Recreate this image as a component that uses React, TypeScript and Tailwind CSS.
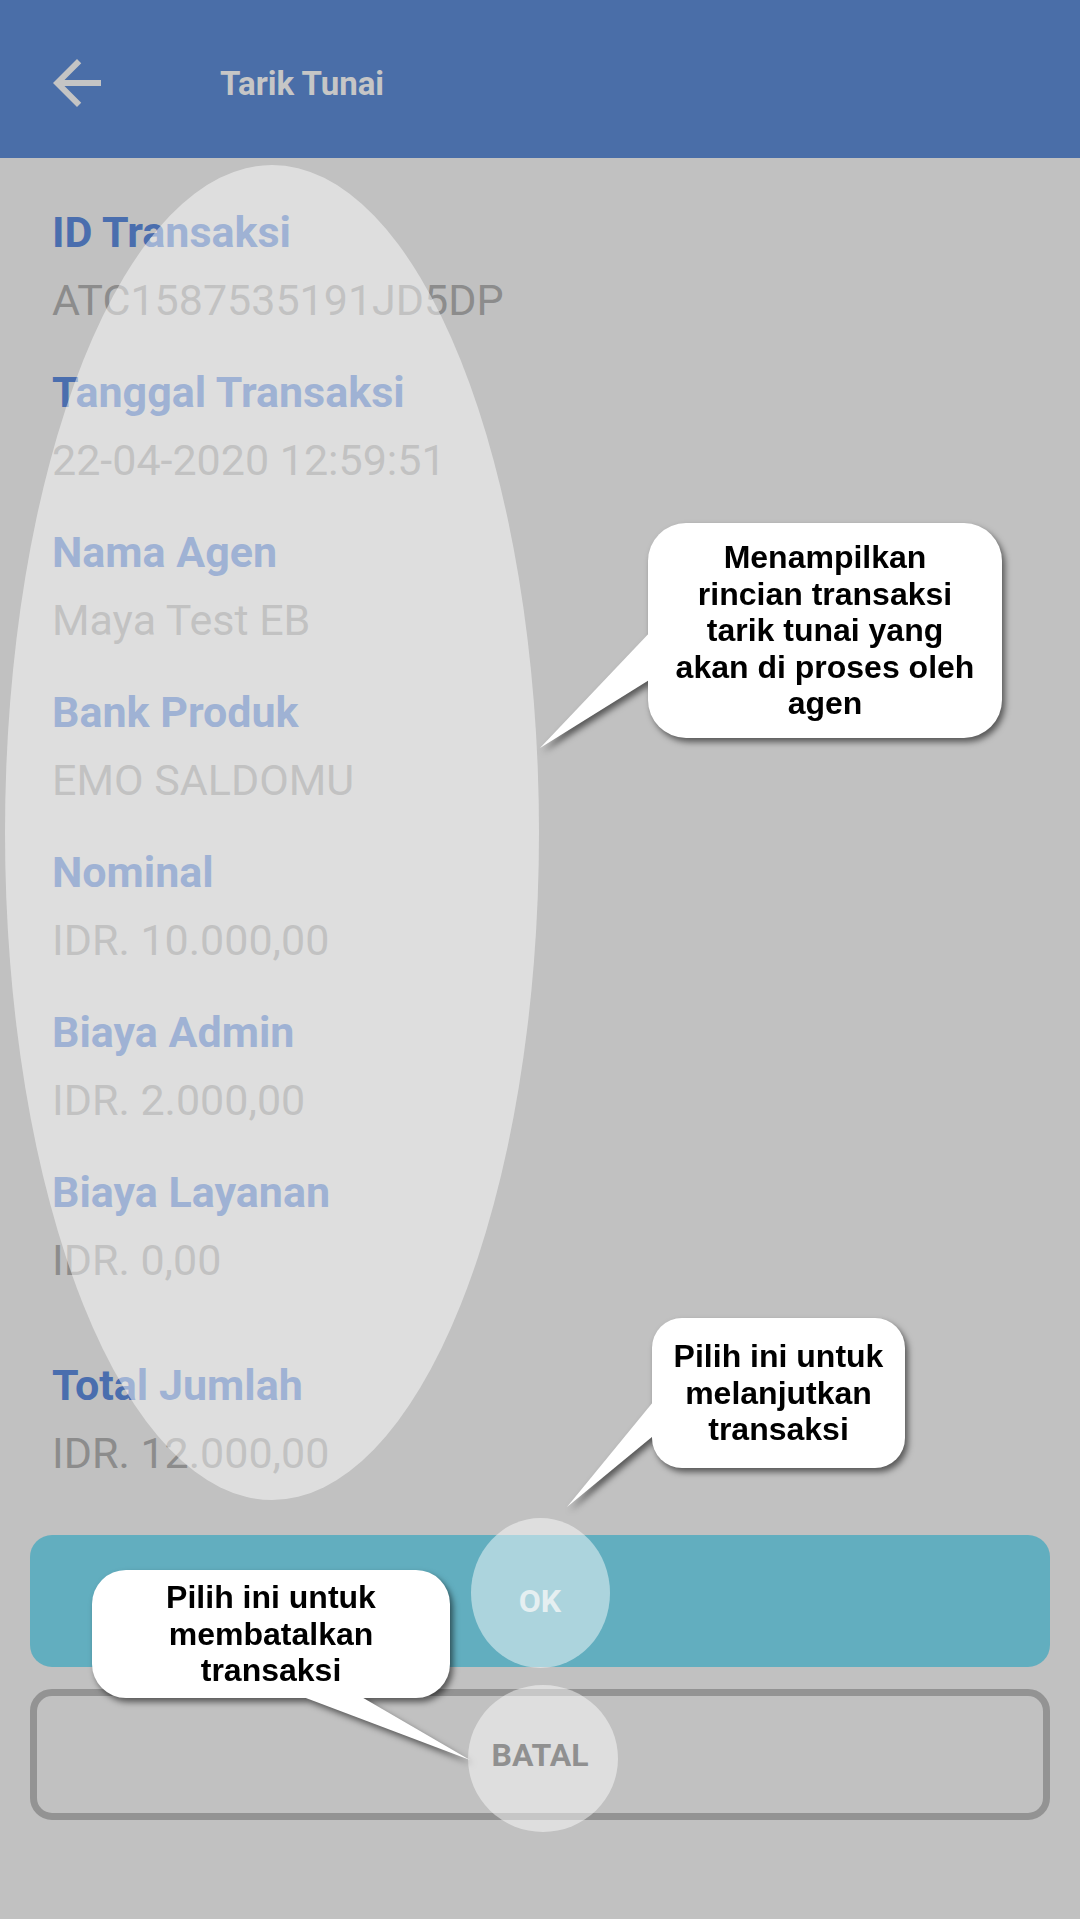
import React from "react";

const fields: { label: string; value: string }[] = [
  { label: "ID Transaksi", value: "ATC1587535191JD5DP" },
  { label: "Tanggal Transaksi", value: "22-04-2020 12:59:51" },
  { label: "Nama Agen", value: "Maya Test EB" },
  { label: "Bank Produk", value: "EMO SALDOMU" },
  { label: "Nominal", value: "IDR. 10.000,00" },
  { label: "Biaya Admin", value: "IDR. 2.000,00" },
  { label: "Biaya Layanan", value: "IDR. 0,00" },
];

function Field({ label, value, className = "" }: { label: string; value: string; className?: string }) {
  return (
    <div className={"flex flex-col gap-[18px] " + className}>
      <div className="text-[43px] leading-[50px] font-bold text-[#4a6eae] whitespace-nowrap">{label}</div>
      <div className="text-[43px] leading-[50px] font-normal text-[#8c8c8c] whitespace-nowrap">{value}</div>
    </div>
  );
}

const bubbleText =
  "flex flex-col items-center justify-center bg-white text-black font-bold text-[32px] leading-[36.5px] whitespace-nowrap text-center";

export default function App() {
  return (
    <div
      className="relative w-[1080px] min-h-[1919px] bg-[#c1c1c1] overflow-hidden"
      style={{ fontFamily: "Roboto, 'Noto Sans', sans-serif" }}
    >
      {/* Header */}
      <div className="h-[158px] bg-[#4a6ea8] flex items-center pt-[8px] pl-[41px]">
        <svg width="72" height="72" viewBox="0 0 24 24" fill="#c4c4c4">
          <path d="M20 11H7.83l5.59-5.59L12 4l-8 8 8 8 1.41-1.41L7.83 13H20v-2z" />
        </svg>
        <div className="ml-[107px] mt-[2px] text-[33px] leading-[36px] font-bold text-[#c6c6c6]">Tarik Tunai</div>
      </div>

      {/* Fields */}
      <div className="flex flex-col gap-[42px] pt-[49px] pl-[52px]">
        {fields.map((f) => (
          <Field key={f.label} label={f.label} value={f.value} />
        ))}
        <Field label="Total Jumlah" value="IDR. 12.000,00" className="mt-[33px]" />
      </div>

      {/* Buttons */}
      <div className="flex flex-col gap-[22px] px-[30px] pt-[57px]">
        <div className="h-[132px] rounded-[22px] bg-[#62aebf] flex items-center justify-center">
          <span className="text-[32px] font-bold text-[#cfe0e4]">OK</span>
        </div>
        <div className="h-[131px] rounded-[22px] border-[7px] border-[#939393] flex items-center justify-center">
          <span className="text-[32px] font-bold text-[#2e2e2e]">BATAL</span>
        </div>
      </div>

      {/* Highlight overlays */}
      <div className="pointer-events-none absolute left-[5px] top-[165px] w-[534px] h-[1335px] rounded-[50%] bg-white/[0.47]" />
      <div className="pointer-events-none absolute left-[471px] top-[1518px] w-[139px] h-[150px] rounded-[50%] bg-white/[0.47]" />
      <div className="pointer-events-none absolute left-[468px] top-[1685px] w-[150px] h-[147px] rounded-[50%] bg-white/[0.47]" />

      {/* Callout 1 */}
      <div
        className="absolute left-[530px] top-[520px] w-[480px] h-[240px] drop-shadow-[3px_4px_3px_rgba(0,0,0,0.55)]"
        style={{ fontFamily: "'Liberation Sans', Arial, sans-serif" }}
      >
        <svg className="absolute inset-0" width="480" height="240">
          <polygon points="124,108 10,228 124,157" fill="#ffffff" />
        </svg>
        <div className={"absolute left-[118px] top-[3px] w-[354px] h-[215px] rounded-[38px] " + bubbleText}>
          <span>Menampilkan</span>
          <span>rincian transaksi</span>
          <span>tarik tunai yang</span>
          <span>akan di proses oleh</span>
          <span>agen</span>
        </div>
      </div>

      {/* Callout 2 */}
      <div
        className="absolute left-[555px] top-[1310px] w-[360px] h-[210px] drop-shadow-[3px_4px_3px_rgba(0,0,0,0.55)]"
        style={{ fontFamily: "'Liberation Sans', Arial, sans-serif" }}
      >
        <svg className="absolute inset-0" width="360" height="210">
          <polygon points="103,86 12,197 103,122" fill="#ffffff" />
        </svg>
        <div className={"absolute left-[97px] top-[8px] w-[253px] h-[150px] rounded-[30px] " + bubbleText}>
          <span>Pilih ini untuk</span>
          <span>melanjutkan</span>
          <span>transaksi</span>
        </div>
      </div>

      {/* Callout 3 */}
      <div
        className="absolute left-[85px] top-[1565px] w-[400px] h-[210px] drop-shadow-[3px_4px_3px_rgba(0,0,0,0.55)]"
        style={{ fontFamily: "'Liberation Sans', Arial, sans-serif" }}
      >
        <svg className="absolute inset-0" width="400" height="210">
          <polygon points="205,127 385,195 268,127" fill="#ffffff" />
        </svg>
        <div className={"absolute left-[7px] top-[5px] w-[358px] h-[128px] rounded-[34px] " + bubbleText}>
          <span>Pilih ini untuk</span>
          <span>membatalkan</span>
          <span>transaksi</span>
        </div>
      </div>
    </div>
  );
}
